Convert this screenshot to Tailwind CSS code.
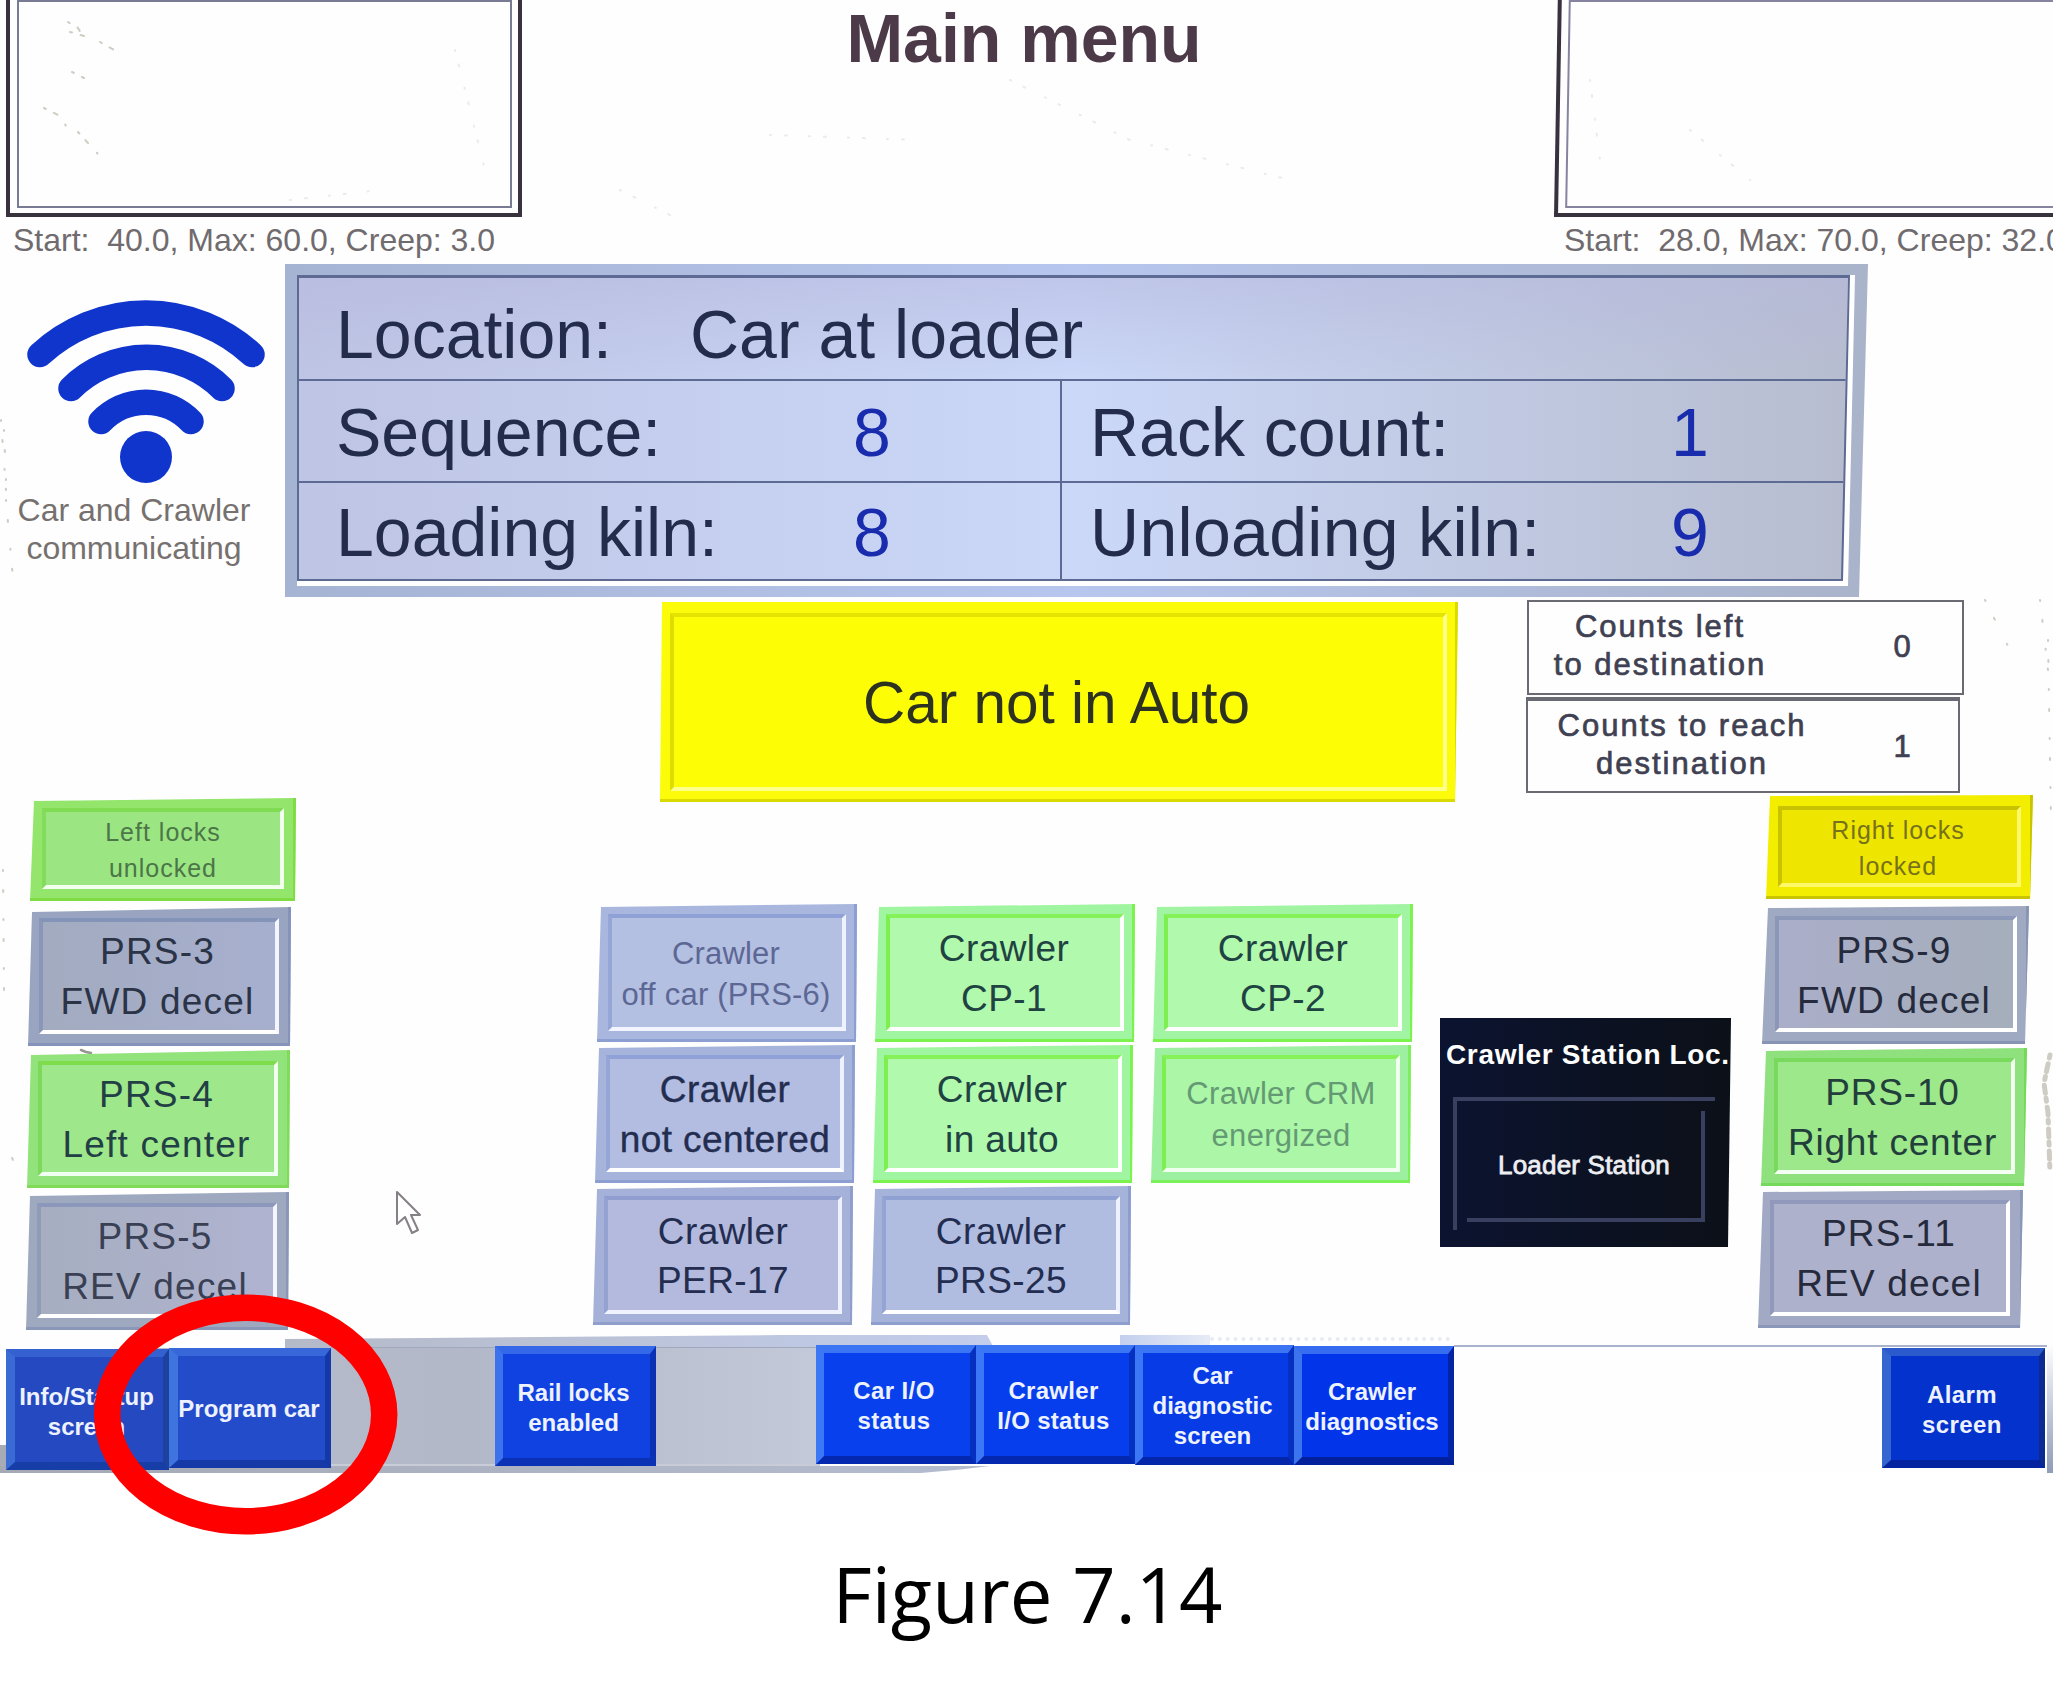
<!DOCTYPE html>
<html lang="en">
<head>
<meta charset="utf-8">
<title>Main menu</title>
<script src="https://cdn.jsdelivr.net/npm/@tailwindcss/browser@4"></script>
</head>
<body class="bg-white">
<main class="relative flex h-[1695px] w-[2053px] flex-col overflow-hidden bg-[#fefefe] font-['Liberation_Sans',Arial,sans-serif]">

  <!-- dust specks on the screen -->
  <svg class="absolute left-0 top-0" width="2053" height="1480" fill="none" stroke="#a9a693" stroke-width="2" stroke-linecap="round" opacity=".55">
    <path stroke-dasharray="2 9 4 13 1 17" d="M68 22l10 6 6 10M70 32l14 4M100 42l14 8M72 72l12 6M44 108l16 8 6 10M78 132l20 22M12 1158l1 2"/>
    <path stroke-dasharray="1 19 2 27" d="M1 420l5 70M4 430l2 50M6 500l8 90M3 870l1 120M2048 640l3 180M2040 600l8 70M1985 600l30 60"/>
    <path stroke-width="5" stroke-dasharray="3 6 8 5" d="M2050 1055l-6 28 4 30 2 60"/>
    <path stroke-dasharray="1 14 2 22" stroke="#dcdade" d="M455 50l30 120M620 190l60 30M770 135l150 5M1010 80l120 60 160 40M1590 80l10 80M1690 130l60 50M290 200l90 -10"/>
    <path stroke="#444035" stroke-width="2.5" d="M81 1050l5 2 5 1"/>
  </svg>

  <header class="flex h-[264px] shrink-0">
    <section class="ml-[6px] w-[516px] shrink-0">
      <div class="h-[217px] border-x-4 border-b-4 border-[#37323e] pb-[5px] pl-[7px] pr-[6px]">
        <div class="h-full border-2 border-[#797b94]"></div>
      </div>
      <p class="mt-[3px] whitespace-pre pl-[7px] text-[32px] leading-[40px] text-[#706b6e]">Start:  40.0, Max: 60.0, Creep: 3.0</p>
    </section>
    <h1 class="flex-1 pr-[28px] text-center text-[68px] font-bold leading-[76px] text-[#4c3a49]">Main menu</h1>
    <section class="w-[499px] shrink-0">
      <div class="h-[217px] w-[520px] origin-bottom-left -skew-x-1 border-x-4 border-b-4 border-[#37323e] pb-[5px] pl-[7px]">
        <div class="h-full border-2 border-[#8684a0]"></div>
      </div>
      <p class="mt-[3px] whitespace-pre pl-[10px] text-[32px] leading-[40px] text-[#706b6e]">Start:  28.0, Max: 70.0, Creep: 32.0</p>
    </section>
  </header>

  <section class="flex h-[333px] shrink-0">
    <div class="w-[285px] shrink-0 pr-[17px] text-center text-[32px] leading-[38px] text-[#76716f]">
      <svg width="268" height="227" viewBox="0 264 268 227" fill="none" stroke="#1035cc" stroke-width="25.500" stroke-linecap="round">
        <path d="M40 354.500A156 156 0 0 1 252 354.500"/>
        <path d="M71 388.500A107 107 0 0 1 222 388.500"/>
        <path d="M101 421.500A62 62 0 0 1 191 421.500"/>
        <circle cx="146" cy="457" r="26" fill="#1035cc" stroke="none"/>
      </svg>
      <p>Car and Crawler</p>
      <p>communicating</p>
    </div>
    <div class="h-[333px] w-[1583px] bg-linear-to-r from-[#a5b4d3] via-[#b7c6ee] to-[#a9b3ca] pb-[11px] pl-[12px] pr-[13px] pt-[11px] [clip-path:polygon(0_0,100%_0,calc(100%-9px)_100%,0_100%)]">
      <div class="h-full bg-white pb-[5px] pr-[5px] [clip-path:polygon(0_0,100%_0,calc(100%-7px)_100%,0_100%)]">
        <div class="h-full bg-[#5c6a94] p-[2px] pt-[3px] [clip-path:polygon(0_0,100%_0,calc(100%-7px)_100%,0_100%)]">
          <div class="flex h-full flex-col bg-linear-to-r from-[#bfc5e4] via-[#cbd8f8] to-[#b7bdcf] text-[68px] text-[#232d4b] [clip-path:polygon(0_0,100%_0,calc(100%-7px)_100%,0_100%)]">
            <div class="flex h-[103px] border-b-2 border-[#5c6a94] bg-linear-to-b from-[#b4b6dc]/50 to-transparent pl-[37px] leading-[113px]">
              <span class="w-[354px]">Location:</span><span>Car at loader</span>
            </div>
            <div class="flex h-[102px] border-b-2 border-[#5c6a94] leading-[103px]">
              <div class="flex w-[763px] border-r-2 border-[#5c6a94] pl-[37px]">
                <span class="w-[517px]">Sequence:</span><span class="text-[#1a2cae]">8</span>
              </div>
              <div class="flex pl-[28px]">
                <span class="w-[581px]">Rack count:</span><span class="text-[#1a2cae]">1</span>
              </div>
            </div>
            <div class="flex flex-1 leading-[98px]">
              <div class="flex w-[763px] border-r-2 border-[#5c6a94] pl-[37px]">
                <span class="w-[517px]">Loading kiln:</span><span class="text-[#1a2cae]">8</span>
              </div>
              <div class="flex pl-[28px]">
                <span class="w-[581px] tracking-[0.3px]">Unloading kiln:</span><span class="text-[#1a2cae]">9</span>
              </div>
            </div>
          </div>
        </div>
      </div>
    </div>
  </section>

  <section class="flex h-[198px] shrink-0 items-start">
    <div class="ml-[660px] mt-[5px] h-[200px] w-[798px] shrink-0 border-b-3 border-r-3 border-[#dada00] bg-[#fbfb0a] pb-[8px] pl-[10px] pr-[8px] pt-[11px] [clip-path:polygon(2px_0,100%_0,calc(100%-3px)_100%,0_100%)]">
      <div class="flex h-full items-center justify-center border-4 border-b-[#ffff8c] border-l-[#dddd00] border-r-[#ffff8c] border-t-[#e4e400] bg-[#fdfd06] pr-[4px] pt-[3px] text-[58.5px] leading-none text-[#2c3120]">Car not in Auto</div>
    </div>
    <div class="ml-[69px] mt-[3px] flex shrink-0 flex-col gap-[2px] text-[31px] leading-[38px] tracking-[2px] text-[#3f4152] [-webkit-text-stroke:0.7px_#3f4152]">
      <div class="flex h-[95px] w-[437px] border-2 border-[#6a6a72]">
        <p class="w-[262px] shrink-0 pt-[6px] text-center">Counts left<br>to destination</p>
        <p class="w-[224px] shrink-0 pt-[26px] text-center">0</p>
      </div>
      <div class="-ml-px flex h-[96px] w-[434px] border-2 border-t-4 border-[#6a6a72]">
        <p class="w-[308px] shrink-0 pt-[6px] text-center">Counts to reach<br>destination</p>
        <p class="w-[134px] shrink-0 pt-[27px] text-center">1</p>
      </div>
    </div>
  </section>

  <section class="flex h-[540px] shrink-0 items-start">
    <!-- left sensors -->
    <div class="w-[597px] shrink-0 pl-[27px] pt-[3px] text-center text-[37px] leading-[50px] tracking-[1.2px] text-[#2b3347]">
      <div class="ml-[3px] h-[103px] w-[266px] border-b-3 border-r-3 border-[#7fdc44] bg-[#93e56c] pb-[9px] pl-[12px] pr-[9px] pt-[10px] [clip-path:polygon(4px_3px,100%_0,calc(100%-1px)_100%,0_100%)]">
        <div class="flex h-full items-center justify-center border-4 border-b-[#f2ffee] border-l-[#84dc5c] border-r-[#f2ffee] border-t-[#7fdc52] bg-[#9be583] pt-[3px] text-[25px] leading-[36px] tracking-[1px] text-[#4c7548]">Left locks<br>unlocked</div>
      </div>
      <div class="ml-px mt-[6px] h-[139px] w-[263px] border-b-3 border-r-3 border-[#8593bb] bg-[#99a5c0] pb-[9px] pl-[11px] pr-[9px] pt-[11px] [clip-path:polygon(4px_5px,100%_0,calc(100%-1px)_100%,0_100%)]">
        <div class="flex h-full items-center justify-center border-4 border-b-white border-l-[#8996b8] border-r-[#f3f6ff] border-t-[#8493b8] bg-linear-to-r from-[#a2abbf] to-[#a7afcf] pr-[3px] pt-[2px]">PRS-3<br>FWD decel</div>
      </div>
      <div class="mt-[4px] h-[138px] w-[263px] border-b-3 border-r-3 border-[#80dc58] bg-[#93e37c] pb-[9px] pl-[11px] pr-[9px] pt-[11px] [clip-path:polygon(4px_5px,100%_0,calc(100%-1px)_100%,0_100%)]">
        <div class="flex h-full items-center justify-center border-4 border-b-[#effff0] border-l-[#7dd95a] border-r-[#effff0] border-t-[#7fdd4c] bg-[#9ee78a] pr-[3px] pt-[2px] text-[#223f45]">PRS-4<br>Left center</div>
      </div>
      <div class="-ml-px mt-[4px] h-[138px] w-[263px] border-b-3 border-r-3 border-[#8b97b8] bg-[#9ea9c0] pb-[9px] pl-[11px] pr-[9px] pt-[11px] [clip-path:polygon(4px_4px,100%_0,calc(100%-1px)_100%,0_100%)]">
        <div class="flex h-full items-center justify-center border-4 border-b-white border-l-[#8f9bb8] border-r-[#f3f6ff] border-t-[#8b98bb] bg-linear-to-r from-[#a6aec0] to-[#b0b3d0] pr-[4px] pt-[2px] text-[#3a4054]">PRS-5<br>REV decel</div>
      </div>
    </div>

    <!-- crawler sensors -->
    <div class="flex w-[843px] shrink-0 flex-col gap-[3px] pt-[109px] text-center text-[37px] leading-[49.5px] tracking-[0.4px] text-[#232d50]">
      <div class="flex gap-[18px]">
        <div class="h-[138px] w-[260px] border-b-3 border-r-3 border-[#8d9fd2] bg-[#a9b7de] pb-[8px] pl-[11px] pr-[8px] pt-[10px] [clip-path:polygon(4px_3px,100%_0,calc(100%-1px)_100%,0_100%)]">
          <div class="flex h-full items-center justify-center border-4 border-b-[#f2f5ff] border-l-[#94a5d6] border-r-[#eef2ff] border-t-[#8fa1d6] bg-[#b4c0e2] pr-[2px] pt-[3px] text-[31px] leading-[41.5px] tracking-[0.2px] text-[#5d6794]">Crawler<br>off car (PRS-6)</div>
        </div>
        <div class="h-[138px] w-[260px] border-b-3 border-r-3 border-[#7cf24c] bg-[#a0f6a0] pb-[8px] pl-[11px] pr-[8px] pt-[10px] [clip-path:polygon(4px_3px,100%_0,calc(100%-1px)_100%,0_100%)]">
          <div class="flex h-full items-center justify-center border-4 border-b-white border-l-[#7df050] border-r-white border-t-[#86f25a] bg-[#b1f9ac] pr-[2px] pt-[2px] text-[#1f4243]">Crawler<br>CP-1</div>
        </div>
        <div class="h-[138px] w-[260px] border-b-3 border-r-3 border-[#7cf24c] bg-[#a0f4a2] pb-[8px] pl-[11px] pr-[8px] pt-[10px] [clip-path:polygon(4px_3px,100%_0,calc(100%-1px)_100%,0_100%)]">
          <div class="flex h-full items-center justify-center border-4 border-b-white border-l-[#7df050] border-r-white border-t-[#86f25a] bg-[#b1f9ac] pt-[2px] text-[#1f4243]">Crawler<br>CP-2</div>
        </div>
      </div>
      <div class="-ml-[2px] flex gap-[18px]">
        <div class="h-[138px] w-[260px] border-b-3 border-r-3 border-[#8d9fd2] bg-[#a6b4dc] pb-[8px] pl-[11px] pr-[8px] pt-[10px] [clip-path:polygon(4px_3px,100%_0,calc(100%-1px)_100%,0_100%)]">
          <div class="flex h-full items-center justify-center whitespace-nowrap border-4 border-b-white border-l-[#94a5d6] border-r-[#eef2ff] border-t-[#8fa1d6] bg-[#b3bde2] pt-[2px] [-webkit-text-stroke:0.4px_#232d50]">Crawler<br>not centered</div>
        </div>
        <div class="h-[138px] w-[260px] border-b-3 border-r-3 border-[#7cf24c] bg-[#a0f6a0] pb-[8px] pl-[11px] pr-[8px] pt-[10px] [clip-path:polygon(4px_3px,100%_0,calc(100%-1px)_100%,0_100%)]">
          <div class="flex h-full items-center justify-center border-4 border-b-white border-l-[#7df050] border-r-white border-t-[#86f25a] bg-[#b1f9ac] pr-[2px] pt-[2px] text-[#1f4243]">Crawler<br>in auto</div>
        </div>
        <div class="h-[138px] w-[260px] border-b-3 border-r-3 border-[#7cf05a] bg-[#9df09f] pb-[8px] pl-[11px] pr-[8px] pt-[10px] [clip-path:polygon(4px_3px,100%_0,calc(100%-1px)_100%,0_100%)]">
          <div class="flex h-full items-center justify-center border-4 border-b-[#f0fff0] border-l-[#7df050] border-r-[#f0fff0] border-t-[#86f25a] bg-[#acf6a8] pt-[3px] text-[31px] leading-[42px] tracking-[0.3px] text-[#649a73]">Crawler CRM<br>energized</div>
        </div>
      </div>
      <div class="-ml-[4px] flex gap-[18px]">
        <div class="h-[139px] w-[260px] border-b-3 border-r-3 border-[#909ecb] bg-[#a5b1d8] pb-[8px] pl-[11px] pr-[8px] pt-[10px] [clip-path:polygon(4px_3px,100%_0,calc(100%-1px)_100%,0_100%)]">
          <div class="flex h-full items-center justify-center border-4 border-b-[#eff3ff] border-l-[#94a2d2] border-r-[#eef2ff] border-t-[#8f9dd0] bg-[#b3bade] pt-[2px]">Crawler<br>PER-17</div>
        </div>
        <div class="h-[139px] w-[260px] border-b-3 border-r-3 border-[#8d9dcd] bg-[#a5b3da] pb-[8px] pl-[11px] pr-[8px] pt-[10px] [clip-path:polygon(4px_3px,100%_0,calc(100%-1px)_100%,0_100%)]">
          <div class="flex h-full items-center justify-center border-4 border-b-white border-l-[#94a4d4] border-r-[#eef2ff] border-t-[#8fa0d2] bg-[#b0bce0] pt-[2px]">Crawler<br>PRS-25</div>
        </div>
      </div>
    </div>

    <!-- crawler station -->
    <div class="mt-[223px] h-[229px] w-[291px] shrink-0 bg-linear-to-r from-[#0c1330] to-[#0c1018] pl-[13px] pt-[20px] text-white [clip-path:polygon(0_0,100%_0,calc(100%-3px)_100%,0_100%)]">
      <p class="-ml-[7px] whitespace-nowrap text-[28px] font-bold leading-[33px] tracking-[0.65px]">Crawler Station Loc.</p>
      <div class="mt-[26px] h-[133px] w-[262px] border-l-4 border-t-4 border-[#39405f] pb-[8px] pl-[10px] pr-[10px] pt-[10px]">
        <div class="flex h-full items-center justify-center border-b-4 border-r-4 border-[#39405f] text-[26px] leading-none tracking-[0.2px] text-[#eceef2] [-webkit-text-stroke:0.8px_#eceef2]">Loader Station</div>
      </div>
    </div>

    <!-- right sensors -->
    <div class="ml-[27px] shrink-0 text-center text-[37px] leading-[50px] tracking-[1.2px] text-[#252a3c]">
      <div class="ml-[8px] h-[104px] w-[267px] border-b-3 border-r-3 border-[#c9c400] bg-[#f3ee00] pb-[9px] pl-[12px] pr-[9px] pt-[11px] [clip-path:polygon(4px_1px,100%_0,calc(100%-3px)_100%,0_100%)]">
        <div class="flex h-full items-center justify-center border-4 border-b-[#fff869] border-l-[#c8c200] border-r-[#fff869] border-t-[#c8c200] bg-[#eee600] pr-[3px] pt-[3px] text-[25px] leading-[36px] tracking-[1px] text-[#77711c]">Right locks<br>locked</div>
      </div>
      <div class="ml-[4px] mt-[7px] h-[138px] w-[267px] border-b-3 border-r-3 border-[#8894b4] bg-[#9fa9c1] pb-[9px] pl-[13px] pr-[9px] pt-[10px] [clip-path:polygon(6px_2px,100%_0,calc(100%-4px)_100%,0_100%)]">
        <div class="flex h-full items-center justify-center border-4 border-b-white border-l-[#8c97b8] border-r-white border-t-[#8c98b8] bg-linear-to-r from-[#aaaec9] to-[#a5aebb] pr-[4px] pt-[3px]">PRS-9<br>FWD decel</div>
      </div>
      <div class="ml-[3px] mt-[4px] h-[138px] w-[266px] border-b-3 border-r-3 border-[#75d95a] bg-[#8ee17c] pb-[9px] pl-[13px] pr-[9px] pt-[10px] [clip-path:polygon(5px_3px,100%_0,calc(100%-3px)_100%,0_100%)]">
        <div class="flex h-full items-center justify-center whitespace-nowrap border-4 border-b-[#f2fff2] border-l-[#79d95c] border-r-[#f2fff2] border-t-[#79d95c] bg-[#9de88b] pr-[4px] pt-[3px] tracking-[0.8px] text-[#223f3c]">PRS-10<br>Right center</div>
      </div>
      <div class="mt-[4px] h-[138px] w-[265px] border-b-3 border-r-3 border-[#8b97b8] bg-[#a1a9c4] pb-[9px] pl-[12px] pr-[10px] pt-[10px] [clip-path:polygon(5px_2px,100%_0,calc(100%-3px)_100%,0_100%)]">
        <div class="flex h-full items-center justify-center border-4 border-b-white border-l-[#9099bb] border-r-white border-t-[#9099bb] bg-[#adb1cb] pr-[2px] pt-[2px]">PRS-11<br>REV decel</div>
      </div>
    </div>
  </section>

  <!-- navigation strip -->
  <nav class="relative h-[138px] shrink-0 text-center text-[24px] font-bold leading-[30px] text-[#eef2ff]">
    <div class="absolute left-[285px] top-0 h-[13px] w-[709px] bg-linear-to-r from-[#b4bac8] to-[#c3cdec] [clip-path:polygon(0_4px,20%_3px,70%_0,99%_0,100%_100%,0_100%)]"></div>
    <div class="absolute left-[1120px] top-0 h-[10px] w-[90px] bg-linear-to-r from-[#c3cfee] to-[#e6ebf6]"></div>
    <div class="absolute left-[1210px] top-[2px] w-[240px] border-t-4 border-dotted border-[#e8ebf2]"></div>
    <div class="absolute left-[1454px] top-[10px] h-[2px] w-[599px] bg-[#a9b3cb]"></div>
    <div class="absolute bottom-0 left-0 h-[28px] w-[120px] bg-[#a7abb5]"></div>
    <div class="absolute bottom-0 left-[120px] h-[125px] w-[700px] bg-linear-to-r from-[#b7bcca] via-[#b2b8c8] to-[#c3c9d8]"></div>
    <div class="absolute left-[331px] top-[12px] h-px w-[485px] bg-[#a0a8bd]"></div>
    <div class="absolute bottom-[6px] left-[331px] h-[3px] w-[485px] bg-[#c8ccd6]"></div>
    <div class="absolute bottom-0 left-0 h-[7px] w-[990px] bg-linear-to-r from-[#a4a9b4] to-[#b4bcd0] [clip-path:polygon(0_0,100%_0,97%_50%,93%_100%,0_100%)]"></div>
    <div class="absolute bottom-0 right-0 h-[130px] w-[6px] bg-linear-to-b from-white to-[#8f9cb8]"></div>

    <div class="relative flex items-start">
      <div class="ml-[6px] mt-[14px] flex h-[121px] w-[163px] items-center justify-center border-y-8 border-l-9 border-r-6 border-b-[#173da6] border-l-[#3a6ad4] border-r-[#1c419e] border-t-[#3461cf] bg-[#2449c1] pr-[5px] pt-[5px]"><span>Info/Startup<br>screen</span></div>
      <div class="mt-[13px] flex h-[120px] w-[162px] items-center justify-center whitespace-nowrap border-y-8 border-l-9 border-r-6 border-b-[#1539a6] border-l-[#3f73dd] border-r-[#1438a8] border-t-[#3767d8] bg-[#234ccb] pr-[5px] pt-[2px]">Program car</div>
      <div class="ml-[164px] mt-[11px] flex h-[120px] w-[161px] items-center justify-center border-y-8 border-l-8 border-r-6 border-b-[#0b31b4] border-l-[#3c73ec] border-r-[#0b31b4] border-t-[#3468e8] bg-[#1042e2] pr-[6px] pt-[3px]"><span>Rail locks<br>enabled</span></div>
      <div class="ml-[160px] mt-[10px] flex h-[119px] w-[160px] items-center justify-center border-y-8 border-l-8 border-r-6 border-b-[#0429b0] border-l-[#3c78f5] border-r-[#0630c0] border-t-[#3b75f4] bg-[#0740ec] pr-[6px] pt-[3px]"><span class="tracking-[0.4px]">Car I/O<br>status</span></div>
      <div class="mt-[10px] flex h-[119px] w-[159px] items-center justify-center whitespace-nowrap border-y-8 border-l-8 border-r-6 border-b-[#0429b0] border-l-[#3c78f5] border-r-[#0630c0] border-t-[#3b75f4] bg-[#063eee] pr-[6px] pt-[3px]"><span class="tracking-[0.3px]">Crawler<br>I/O status</span></div>
      <div class="mt-[10px] flex h-[120px] w-[159px] items-center justify-center border-y-8 border-l-8 border-r-6 border-b-[#0426aa] border-l-[#3c78f5] border-r-[#0630c0] border-t-[#3b75f4] bg-[#063be6] pr-[6px] pt-[1px]"><span>Car<br>diagnostic<br>screen</span></div>
      <div class="mt-[11px] flex h-[119px] w-[160px] items-center justify-center whitespace-nowrap border-y-8 border-l-8 border-r-6 border-b-[#03209c] border-l-[#3c74ee] border-r-[#0424a4] border-t-[#366df0] bg-[#0235ea] pr-[6px] pt-[3px]"><span>Crawler<br>diagnostics</span></div>
      <div class="ml-[428px] mt-[13px] flex h-[120px] w-[163px] items-center justify-center border-y-8 border-l-9 border-r-6 border-b-[#0424a0] border-l-[#3565cf] border-r-[#0c2a90] border-t-[#2a5acb] bg-[#0332cc] pr-[6px] pt-[3px]"><span class="tracking-[0.4px]">Alarm<br>screen</span></div>
    </div>
  </nav>

  <footer class="flex-1 bg-white pt-[69px] text-center font-['Open_Sans',sans-serif] text-[76px] leading-[104px] text-black"><span class="mr-[-2px]">Figure 7.14</span></footer>

  <!-- mouse pointer -->
  <svg class="absolute left-[393px] top-[1188px]" width="32" height="48" fill="#fff" stroke="#857f86" stroke-width="2" stroke-linejoin="round">
    <path d="M4 4v32l8-7 7 16 6-3-7-15h9z"/>
  </svg>

  <!-- callout ring -->
  <svg class="absolute left-[90px] top-[1290px]" width="312" height="250" fill="none" stroke="#fe0000" stroke-width="26.500">
    <ellipse cx="155.700" cy="124.500" rx="138.500" ry="106.700"/>
  </svg>
</main>
</body>
</html>
